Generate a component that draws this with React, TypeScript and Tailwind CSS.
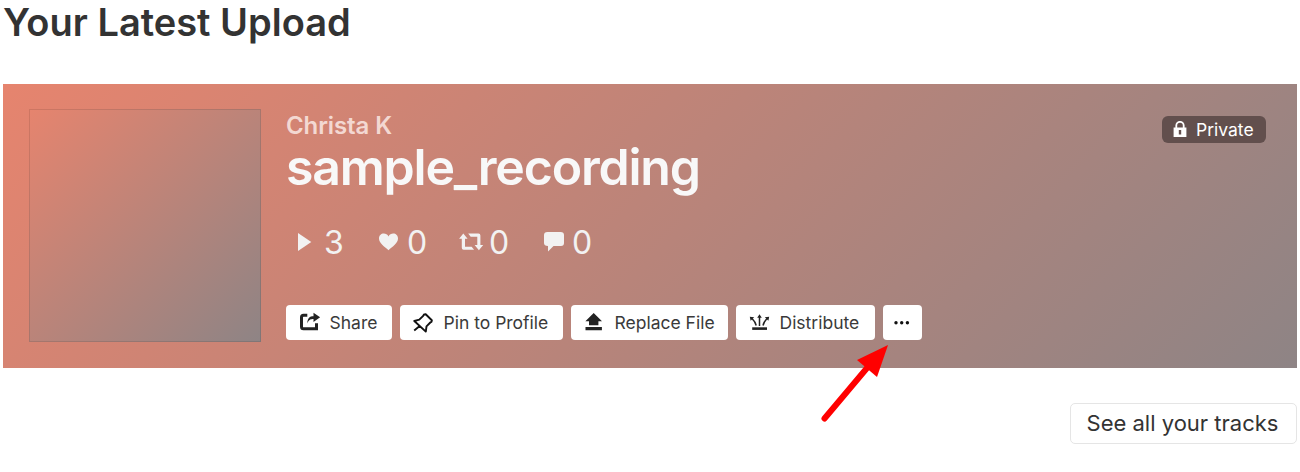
import type { ReactNode } from "react";

function Stat({ icon, value, className }: { icon: ReactNode; value: number; className: string }) {
  return (
    <div className={`flex items-center ${className}`}>
      {icon}
      <span className="pt-0.5 text-[32px] leading-10 font-normal tracking-[-0.500px]">{value}</span>
    </div>
  );
}

function ActionButton({ icon, label, className }: { icon: ReactNode; label: string; className: string }) {
  return (
    <button className={`flex h-[35px] items-center rounded-[4px] bg-white pl-[13px] text-[17.5px] whitespace-nowrap text-[#3a3a3a] ${className}`}>
      {icon}
      <span className="ml-[8.500px] pt-0.5">{label}</span>
    </button>
  );
}

function PlayIcon() {
  return (
    <svg className="mr-[14px] h-6 w-6 overflow-visible" viewBox="0 0 24 24" fill="currentColor">
      <path d="M12 3v18l13.300-9z" />
    </svg>
  );
}

function HeartIcon() {
  return (
    <svg className="mr-[5px] h-6 w-6" viewBox="0 0 24 24" fill="currentColor">
      <path d="M10.500 20.200C6.500 16.800 1 13.200 1 8.600c0-3 2.100-5 4.800-5 2 0 3.700 1 4.700 2.800 1-1.800 2.700-2.800 4.700-2.800 2.700 0 4.800 2 4.800 5 0 4.600-5.500 8.200-9.500 11.600z" />
    </svg>
  );
}

function RepostIcon() {
  return (
    <svg className="mr-[6px] h-6 w-6 overflow-visible" viewBox="0 0 24 24" fill="currentColor">
      <path d="M4.300 3.600l4.300 5.200H6v7.900h6.600l2.500 3H4.700q-1.900 0-1.900-1.900v-9H.1z" />
      <path d="M9.200 3.600h10.300q1.900 0 1.900 1.900v9.500h2.800l-4.300 5.200-4.300-5.200h2.700V6.700h-6.600z" />
    </svg>
  );
}

function CommentIcon() {
  return (
    <svg className="mr-[5px] h-6 w-6" viewBox="0 0 24 24" fill="currentColor">
      <path d="M4.500 2h13q3.500 0 3.500 3v8q0 3-3 3h-7.500L5 21.500V16q-4 0-4-3V5q0-3 3.500-3z" />
    </svg>
  );
}

function ShareIcon() {
  return (
    <svg className="h-[22px] w-[22px]" viewBox="0 0 22 22" fill="none">
      <path d="M8.300 3.300H4.500q-2 0-2 2v9.400q0 2 2 2h13v-5.500" stroke="#222" strokeWidth="3" />
      <path d="M8.300 11.500c.2-5.500 2.500-7.200 6.200-7.200V.8l6.600 4.500-6.600 4.700V7.100c-2.600 0-4.600.5-6.200 4.400z" fill="#222" />
    </svg>
  );
}

function PinIcon() {
  return (
    <svg className="h-[22px] w-[22px]" viewBox="0 0 22 22" fill="none" stroke="#111" strokeWidth="1.900" strokeLinejoin="round">
      <path d="M12.700 2.200l6.100 6q.3 2-1.500 2.300l-3.800 3.800-.7 5.300L1.300 9l5-1.300 3.900-3.900q.5-1.800 2.500-1.600zM6.700 14L1.200 18.500" />
    </svg>
  );
}

function ReplaceIcon() {
  return (
    <svg className="h-[22px] w-[22px]" viewBox="0 0 22 22" fill="#222">
      <path d="M9.700 1L18 9.300h-3.600v4H5v-4H1.400zM1.500 15h16.400v3.200H1.500z" />
    </svg>
  );
}

function DistributeIcon() {
  return (
    <svg className="h-[22px] w-[22px]" viewBox="0 0 22 22" fill="none">
      <path d="M3.200 16.600h14.800" stroke="#222" strokeWidth="2.600" />
      <path d="M7.200 13.500Q6.500 10 3 6.500M10.500 14V5M14 13.500q.7-3.500 4-7" stroke="#222" strokeWidth="1.500" />
      <path d="M.8 4.700l4.400.5-3.600 3.600zM10.500 2.200l2.300 3.600H8.200zM20.200 4.700l-.8 4.100-3.600-3.600z" fill="#222" />
    </svg>
  );
}

export default function App() {
  return (
    <main className="relative h-[472px] w-[1300px] overflow-hidden bg-white pt-px pl-[3px] font-['Inter',sans-serif] text-[#333]">
      <h1 className="h-[83px] text-[38px] leading-[43px] font-semibold">Your Latest Upload</h1>
      <section className="flex h-[284px] w-[1294px] bg-[linear-gradient(135deg,#e6846e,#8e8485)] pt-[25px] pl-[26px]">
        <div className="h-[233px] w-[232px] shrink-0 border border-black/10 bg-[linear-gradient(135deg,#e6846e,#8e8485)] bg-origin-border" />
        <div className="ml-[25px] flex flex-col items-start">
          <div className="mt-px h-8 text-[24px] leading-8 font-semibold tracking-[-0.100px] text-[#f3d8d2]">Christa K</div>
          <h2 className="h-[60px] text-[50px] leading-[50px] font-semibold tracking-[-1.200px] text-[#f8f8f8]">sample_recording</h2>
          <div className="mt-[20px] flex h-10 items-center text-[#f2f2f2]">
            <Stat icon={<PlayIcon />} value={3} className="w-[92px]" />
            <Stat icon={<HeartIcon />} value={0} className="w-[81px]" />
            <Stat icon={<RepostIcon />} value={0} className="w-[84px]" />
            <Stat icon={<CommentIcon />} value={0} className="" />
          </div>
          <div className="mt-[43px] flex gap-2">
            <ActionButton icon={<ShareIcon />} label="Share" className="w-[106px]" />
            <ActionButton icon={<PinIcon />} label="Pin to Profile" className="w-[163px]" />
            <ActionButton icon={<ReplaceIcon />} label="Replace File" className="w-[157px]" />
            <ActionButton icon={<DistributeIcon />} label="Distribute" className="w-[139px]" />
            <button aria-label="More" className="flex h-[35px] w-[39px] items-center justify-center rounded-[4px] bg-white">
              <svg className="h-4 w-4 overflow-visible" viewBox="0 0 16 16" fill="#111">
                <circle cx="1" cy="7.700" r="1.700" /><circle cx="6.700" cy="7.700" r="1.700" /><circle cx="12.400" cy="7.700" r="1.700" />
              </svg>
            </button>
          </div>
        </div>
        <div className="mt-[7px] mr-[31px] ml-auto flex h-[27px] w-[104px] items-center rounded-[6px] bg-[#624f4d] pl-[11px] text-[17.500px] text-white">
          <svg className="mr-[9px] h-[18px] w-[14px]" viewBox="0 0 14 18" fill="none">
            <path d="M3.300 8V4.500a3.700 3.700 0 0 1 7.400 0v3" stroke="white" strokeWidth="1.800" />
            <path fillRule="evenodd" d="M.6 6.500h12.800v9.500H.6zM5.800 9v4.500h2.400V9z" fill="white" />
          </svg>
          <span className="pt-0.5">Private</span>
        </div>
      </section>
      <div className="flex w-[1294px] justify-end pt-[35px]">
        <button className="h-[41px] w-[227px] rounded-[5px] border border-[#e5e5e5] pr-[2px] text-[22px] whitespace-nowrap">See all your tracks</button>
      </div>
      <svg className="absolute top-[340px] left-[815px] h-[90px] w-[80px]" viewBox="0 0 80 90">
        <path d="M9.500 78.500L52 28" stroke="red" strokeWidth="6" strokeLinecap="round" />
        <path d="M73 5L42 20l20 17z" fill="red" />
      </svg>
    </main>
  );
}
